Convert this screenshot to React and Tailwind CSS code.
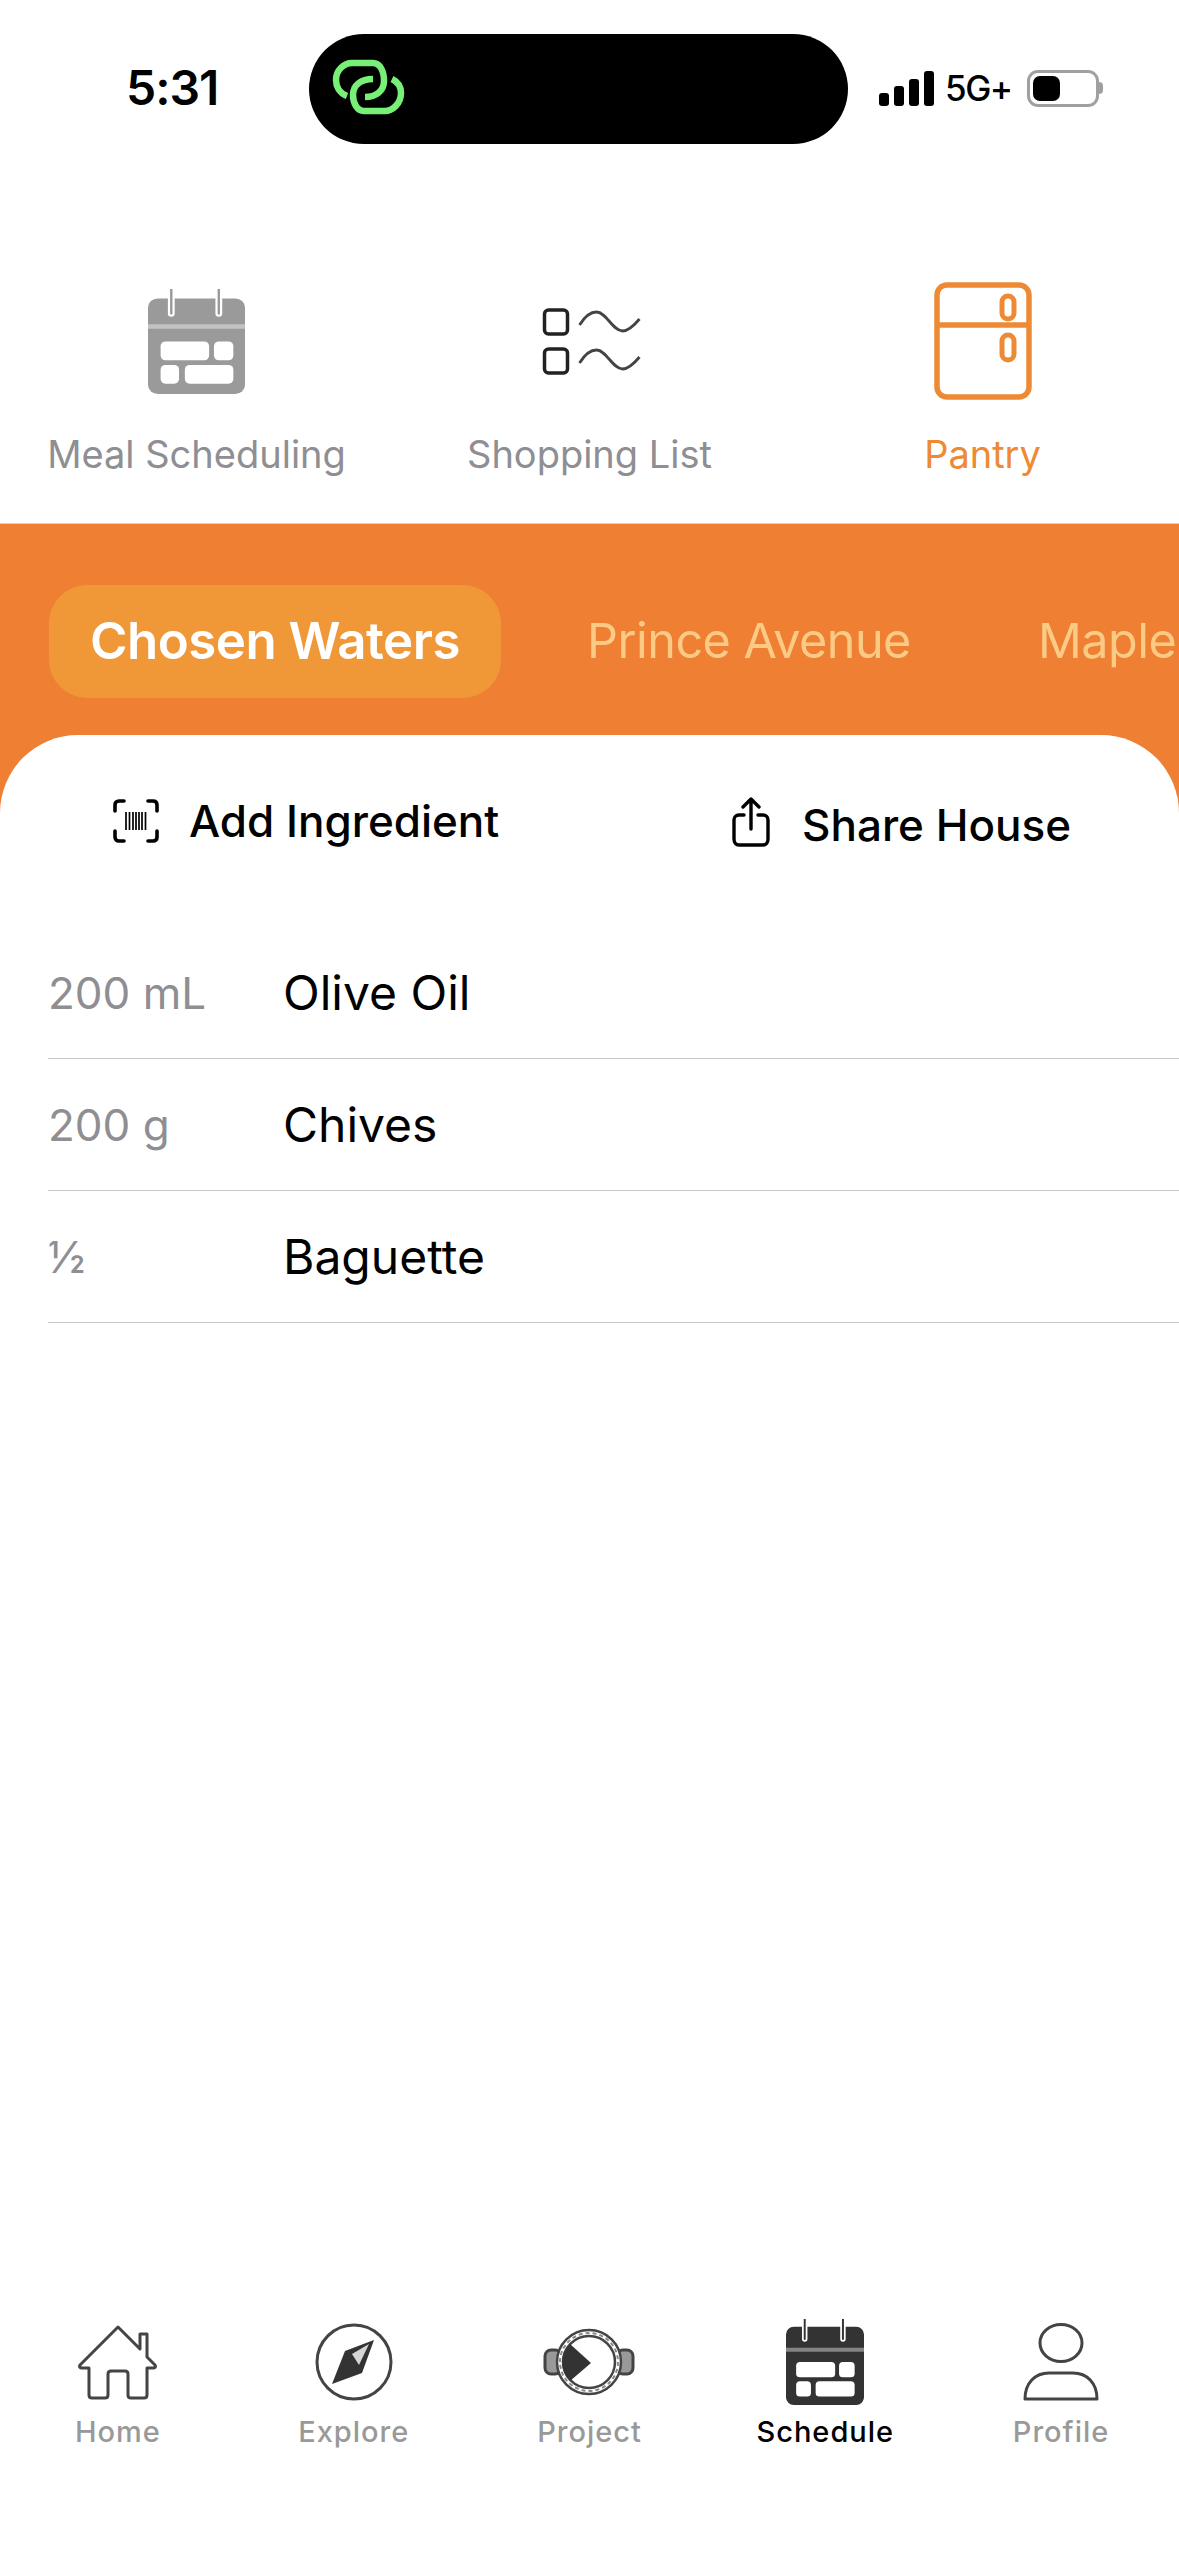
import React from 'react';

const font = { fontFamily: 'Inter, "Liberation Sans", sans-serif' };

function CalendarIcon({ color, className }) {
  return (
    <svg viewBox="0 0 100 112" preserveAspectRatio="none" className={className}>
      <rect x="0" y="10" width="100" height="102" rx="10" fill={color} />
      <path d="M0 40H100" stroke="#fff" strokeOpacity="0.4" strokeWidth="5" />
      <path d="M24 2V26M73 2V26" stroke="#fff" strokeWidth="7" strokeLinecap="round" />
      <path d="M24 0V26M73 0V26" stroke={color} strokeWidth="2.5" strokeLinecap="round" />
      <rect x="13" y="56" width="50" height="20" rx="5" fill="#fff" />
      <rect x="68" y="56" width="20" height="20" rx="5" fill="#fff" />
      <rect x="13" y="81" width="19" height="20" rx="5" fill="#fff" />
      <rect x="38" y="81" width="50" height="20" rx="5" fill="#fff" />
    </svg>
  );
}

function ShoppingIcon({ className }) {
  return (
    <svg viewBox="-1.500 0 102 72" fill="none" className={className}>
      <rect x="4" y="5" width="23" height="24" rx="4" stroke="#222" strokeWidth="3.500" />
      <rect x="4" y="44" width="23" height="24" rx="4" stroke="#222" strokeWidth="3.500" />
      <path d="M39 20C44 12 50 7 56 7C66 7 72 26 82 26C88 26 94 20 99 14" stroke="#444" strokeWidth="2.800" />
      <path d="M39 58C44 50 50 45 56 45C66 45 72 64 82 64C88 64 94 58 99 52" stroke="#444" strokeWidth="2.800" />
    </svg>
  );
}

function FridgeIcon({ className }) {
  return (
    <svg viewBox="0 0 98 118" fill="none" stroke="#ee8a33" className={className}>
      <rect x="3" y="3" width="92" height="112" rx="10" strokeWidth="5.500" />
      <path d="M2 43H96" strokeWidth="5.500" />
      <rect x="68" y="14" width="12" height="23" rx="6" strokeWidth="5" />
      <rect x="68" y="53" width="12" height="25" rx="6" strokeWidth="5" />
    </svg>
  );
}

function BarcodeIcon({ className }) {
  return (
    <svg viewBox="0 0 46 44" fill="none" className={className}>
      <path d="M11 2H6C3.500 2 2 3.500 2 6V12M35 2H40C42.500 2 44 3.500 44 6V12M11 42H6C3.500 42 2 40.500 2 38V32M35 42H40C42.500 42 44 40.500 44 38V32" stroke="#000" strokeWidth="3.600" strokeLinecap="round" />
      <path d="M13 13V31M16.500 13V31M20 13V31M23 13V31M26 13V31M29 13V31M32.500 13V31" stroke="#000" strokeWidth="1.700" />
    </svg>
  );
}

function ShareIcon({ className }) {
  return (
    <svg viewBox="0 0 38 50" fill="none" stroke="#000" strokeWidth="3.400" strokeLinecap="round" strokeLinejoin="round" className={className}>
      <path d="M12 18H7C4 18 2 20 2 23V42C2 45.500 4 48 7 48H31C34 48 36 45.500 36 42V23C36 20 34 18 31 18H26" />
      <path d="M19 32V3M11 10L19 2L27 10" />
    </svg>
  );
}

function HomeIcon({ className }) {
  return (
    <svg viewBox="0 0 79 75" fill="none" stroke="#444" strokeWidth="3" strokeLinejoin="round" className={className}>
      <path d="M40 2L62 24V9H69V32L77 40C78 42 77 43 75 43H69V70C69 72 68 73 66 73H53C51 73 50 72 50 70V49C50 47 49 46 47 46H33C31 46 30 47 30 49V70C30 72 29 73 27 73H14C12 73 11 72 11 70V43H4C2 43 1 42 2 40Z" />
    </svg>
  );
}

function CompassIcon({ className }) {
  return (
    <svg viewBox="0 0 78 78" className={className}>
      <circle cx="39" cy="39" r="37" fill="none" stroke="#444" strokeWidth="3" />
      <path d="M59 17L47 50L17 61L30 28Z" fill="#333" />
      <path d="M54 21L37 31L44 42Z" fill="#fff" opacity="0.8" />
    </svg>
  );
}

function ProjectIcon({ className }) {
  return (
    <svg viewBox="0 0 92 68" fill="none" className={className}>
      <rect x="2" y="22" width="16" height="24" rx="6" fill="#999" stroke="#444" strokeWidth="3" />
      <rect x="74" y="22" width="16" height="24" rx="6" fill="#999" stroke="#444" strokeWidth="3" />
      <circle cx="46" cy="34" r="32" fill="#fff" stroke="#444" strokeWidth="2.500" />
      <circle cx="46" cy="34" r="29" stroke="#888" strokeWidth="2" strokeDasharray="4 3" />
      <circle cx="46" cy="34" r="26" stroke="#444" strokeWidth="2.500" />
      <path d="M27 16L48 35L27 53A26 26 0 0 1 27 16Z" fill="#333" />
    </svg>
  );
}

function ProfileIcon({ className }) {
  return (
    <svg viewBox="0 0 76 78" fill="none" stroke="#444" strokeWidth="3" className={className}>
      <ellipse cx="38" cy="20" rx="21" ry="18.500" />
      <path d="M2 76C2 60 12 50 26 50H50C64 50 74 60 74 76Z" strokeLinejoin="round" />
    </svg>
  );
}

function LinkIcon({ className }) {
  return (
    <svg viewBox="0 0 100 80" fill="none" stroke="#78f078" strokeWidth="6.500" strokeLinecap="butt" className={className}>
      <path d="M27 47C19 44 16 37 16 31C16 21 24 14 32 14H53C60 14 64 22 64 32C64 42 56 48 45 48" />
      <path d="M72 30C78 33 81 38 81 44C81 55 72 62 65 62H44C37 62 33 54 33 46C33 36 41 30 53 30" />
    </svg>
  );
}

const topTabs = [
  { label: 'Meal Scheduling', icon: <CalendarIcon color="#9a9a9a" className="w-[97px] h-[105px]" />, color: 'text-[#8e8e93]' },
  { label: 'Shopping List', icon: <ShoppingIcon className="w-[102px] h-[72px]" />, color: 'text-[#8e8e93]' },
  { label: 'Pantry', icon: <FridgeIcon className="w-[98px] h-[118px]" />, color: 'text-[#ee8a33]' },
];

const ingredients = [
  { amount: '200 mL', name: 'Olive Oil' },
  { amount: '200 g', name: 'Chives' },
  { amount: '½', name: 'Baguette' },
];

const navItems = [
  { label: 'Home', icon: <HomeIcon className="w-[79px] h-[75px]" /> },
  { label: 'Explore', icon: <CompassIcon className="w-[78px] h-[78px]" /> },
  { label: 'Project', icon: <ProjectIcon className="w-[92px] h-[68px]" /> },
  { label: 'Schedule', icon: <CalendarIcon color="#333333" className="w-[78px] h-[86px]" />, active: true },
  { label: 'Profile', icon: <ProfileIcon className="w-[76px] h-[78px]" /> },
];

export default function App() {
  return (
    <div className="w-[1179px] h-[2556px] bg-white flex flex-col overflow-hidden" style={font}>
      {/* Status bar */}
      <div className="h-[144px] pt-[34px] flex items-start shrink-0">
        <div className="w-[309px] h-[110px] flex items-center pl-[126px] pb-[2px]">
          <span className="text-[48px] leading-none font-semibold text-black tracking-[-1px]">5:31</span>
        </div>
        <div className="w-[539px] h-[110px] bg-black rounded-[55px] flex items-center pl-[11px]">
          <LinkIcon className="w-[100px] h-[80px]" />
        </div>
        <div className="flex-1 h-[110px] flex items-center pl-[31px] pb-[2px]">
          <div className="flex items-end gap-[5px] h-[36px]">
            <div className="w-[10px] h-[13px] bg-black rounded-[3px]" />
            <div className="w-[10px] h-[20px] bg-black rounded-[3px]" />
            <div className="w-[10px] h-[27px] bg-black rounded-[3px]" />
            <div className="w-[10px] h-[35px] bg-black rounded-[3px]" />
          </div>
          <span className="ml-[11px] text-[35px] leading-none font-medium text-black tracking-[-1.500px]">5G+</span>
          <div className="ml-[15px] w-[72px] h-[37px] border-[3px] border-[#a0a0a0] rounded-[11px] p-[3px]">
            <div className="w-[27px] h-full bg-black rounded-[7px]" />
          </div>
          <div className="w-[4px] h-[12px] bg-[#a0a0a0] rounded-r-full" />
        </div>
      </div>

      {/* Top tabs */}
      <div className="h-[379px] shrink-0 grid grid-cols-3">
        {topTabs.map((tab) => (
          <div key={tab.label} className="flex flex-col items-center">
            <div className="pt-[138px] flex items-start">
              <div className="h-[118px] flex items-center justify-center">{tab.icon}</div>
            </div>
            <span className={`mt-[35px] text-[38px] leading-none ${tab.color}`}>{tab.label}</span>
          </div>
        ))}
      </div>

      {/* Orange section */}
      <div className="flex-1 min-h-0 bg-[#ee7f33] border-t border-[#d5d5d5] flex flex-col">
        <div className="h-[211px] shrink-0 pt-[61px] pl-[49px] flex items-start gap-[86px] whitespace-nowrap">
          <div className="h-[113px] w-[452px] shrink-0 bg-[#f09838] rounded-[38px] flex items-center justify-center text-[51px] font-semibold text-white tracking-[-0.5px]">
            Chosen Waters
          </div>
          <div className="h-[113px] flex items-center gap-[127px] text-[48.500px] text-[#fbcb86] tracking-[-0.5px]">
            <span className="shrink-0">Prince Avenue</span>
            <span className="shrink-0">Maple</span>
          </div>
        </div>

        {/* Sheet */}
        <div className="flex-1 min-h-0 bg-white rounded-t-[78px] flex flex-col">
          <div className="h-[138px] shrink-0 flex items-start">
            <div className="w-[732px] mt-[64px] pl-[113px] flex items-center gap-[30px]">
              <BarcodeIcon className="w-[46px] h-[44px]" />
              <span className="text-[44px] leading-none font-medium text-black">Add Ingredient</span>
            </div>
            <div className="mt-[62px] flex items-center gap-[32px]">
              <ShareIcon className="w-[38px] h-[50px]" />
              <span className="mt-[6px] text-[44px] leading-none font-medium text-black">Share House</span>
            </div>
          </div>

          <div className="pl-[48px] pt-[54px]">
            {ingredients.map((row) => (
              <div key={row.name} className="h-[132px] border-b border-[#c8c8c8] flex items-center">
                <span className="w-[235px] text-[44px] text-[#8e8e93]">{row.amount}</span>
                <span className="text-[48px] text-black">{row.name}</span>
              </div>
            ))}
          </div>

          {/* Bottom nav */}
          <div className="mt-auto h-[238px] grid grid-cols-5">
            {navItems.map((item) => (
              <div key={item.label} className="flex flex-col items-center">
                <div className="h-[88px] flex items-center justify-center">{item.icon}</div>
                <span className={`mt-[11px] text-[29px] leading-none tracking-[1px] font-medium ${item.active ? 'text-black' : 'text-[#999999]'}`}>
                  {item.label}
                </span>
              </div>
            ))}
          </div>
        </div>
      </div>
    </div>
  );
}
